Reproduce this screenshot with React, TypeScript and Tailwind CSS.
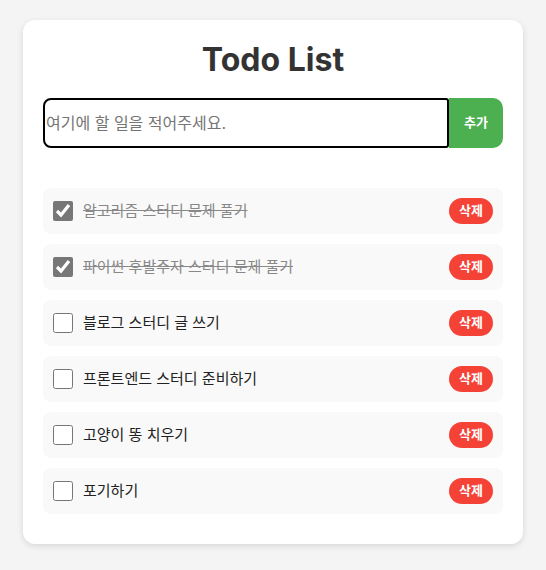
import { useState } from 'react';

type Todo = { id: number; text: string; done: boolean };

const initialTodos: Todo[] = [
  { id: 1, text: '알고리즘 스터디 문제 풀기', done: true },
  { id: 2, text: '파이썬 후발주자 스터디 문제 풀기', done: true },
  { id: 3, text: '블로그 스터디 글 쓰기', done: false },
  { id: 4, text: '프론트엔드 스터디 준비하기', done: false },
  { id: 5, text: '고양이 똥 치우기', done: false },
  { id: 6, text: '포기하기', done: false },
];

const font = "font-['Inter','Noto_Sans_CJK_KR',sans-serif]";

function TodoItem({ todo, onToggle, onDelete }: { todo: Todo; onToggle: () => void; onDelete: () => void }) {
  return (
    <li className="mb-[10px] flex h-[46px] items-center rounded-lg bg-[#f9f9f9] px-[10px]">
      <input
        type="checkbox"
        checked={todo.done}
        onChange={onToggle}
        className="m-0 h-5 w-5 shrink-0 accent-[#777]"
      />
      <span
        className={`ml-[10px] flex-1 text-[15px] ${
          todo.done ? 'text-[#888] line-through' : 'text-[#222]'
        }`}
      >
        {todo.text}
      </span>
      <button
        type="button"
        onClick={onDelete}
        className="h-[26px] rounded-full bg-[#f44336] px-[10px] text-[13px] font-bold text-white"
      >
        삭제
      </button>
    </li>
  );
}

export default function App() {
  const [todos, setTodos] = useState(initialTodos);
  const [text, setText] = useState('');

  const add = () => {
    if (!text.trim()) return;
    setTodos([...todos, { id: Date.now(), text, done: false }]);
    setText('');
  };

  return (
    <div className={`min-h-[570px] bg-[#f4f4f4] pt-5 ${font}`}>
      <div className="mx-auto w-[500px] rounded-xl bg-white p-5 shadow-[0_2px_6px_rgba(0,0,0,0.12)]">
        <h1 className="mb-[19px] text-center text-[32px] leading-[39px] font-bold text-[#333]">Todo List</h1>

        <div className="mb-10 flex h-[50px]">
          <input
            value={text}
            onChange={(e) => setText(e.target.value)}
            placeholder="여기에 할 일을 적어주세요."
            className="min-w-0 flex-1 rounded-l-lg rounded-r-[3px] border-2 border-black pr-1 pl-[1px] text-[16px] outline-none placeholder:text-[#757575]"
          />
          <button
            type="button"
            onClick={add}
            className="w-[54px] rounded-r-[10px] bg-[#4caf50] text-[13px] font-bold text-white"
          >
            추가
          </button>
        </div>

        <ul>
          {todos.map((t) => (
            <TodoItem
              key={t.id}
              todo={t}
              onToggle={() => setTodos(todos.map((x) => (x.id === t.id ? { ...x, done: !x.done } : x)))}
              onDelete={() => setTodos(todos.filter((x) => x.id !== t.id))}
            />
          ))}
        </ul>
      </div>
    </div>
  );
}
